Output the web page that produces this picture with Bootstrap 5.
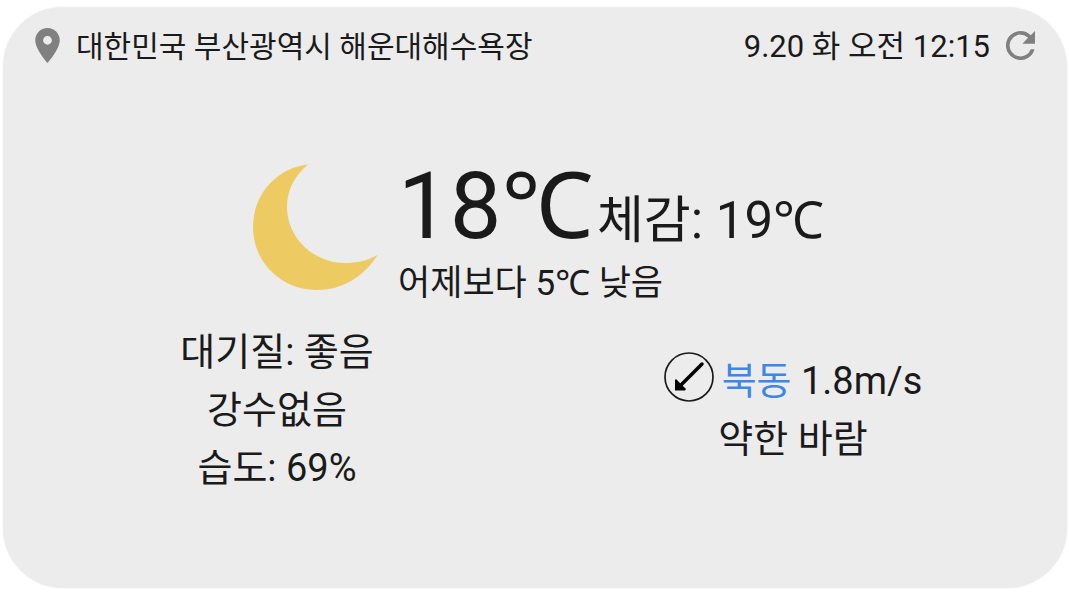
<!DOCTYPE html>
<html lang="ko">
<head>
<meta charset="utf-8">
<meta name="viewport" content="width=device-width, initial-scale=1">
<title>해운대해수욕장 날씨</title>
<link href="https://cdn.jsdelivr.net/npm/bootstrap@5.3.0/dist/css/bootstrap.min.css" rel="stylesheet">
<style>
body { font-family: Roboto, "Noto Sans", "Noto Sans CJK KR", sans-serif; color: #1a1a1a; background: #fff; padding: 7px 2px 4px 3px; }
.weather { background: #ececec; border-radius: 60px; padding: 14px 16px 16px; box-shadow: 0 0 2px #ececec; }
.topbar { font-size: 30px; line-height: 44px; }
.topbar span, .topbar time { padding-top: 4px; }
.topbar time { font-size: 31px; }
.topbar svg { fill: #808080; display: block; }
.refresh { line-height: 1; }
.now { margin-top: 86px; margin-left: 233px; gap: 20px; }
.readings { padding-top: 4px; }
.temp { font-size: 92px; line-height: 96px; }
.feels { font-size: 51px; line-height: 96px; }
.versus { font-size: 35px; line-height: 30px; }
.details { font-size: 38px; line-height: 58px; }
.wind-dir { color: #3e87e8; }
</style>
</head>
<body class="min-vh-100 d-flex">
<main class="weather flex-grow-1">
  <header class="topbar d-flex justify-content-between align-items-center px-3">
    <div class="d-flex align-items-center gap-3">
      <svg width="25" height="35" viewBox="5 2 14 20" aria-hidden="true"><path d="M12 2C8.130 2 5 5.130 5 9c0 5.250 7 13 7 13s7-7.750 7-13c0-3.870-3.130-7-7-7zm0 9.500a2.500 2.500 0 1 1 0-5 2.500 2.500 0 0 1 0 5z"/></svg>
      <span>대한민국 부산광역시 해운대해수욕장</span>
    </div>
    <div class="d-flex align-items-center gap-3">
      <time>9.20 화 오전 12:15</time>
      <button type="button" class="refresh border-0 bg-transparent p-0" aria-label="새로고침">
        <svg width="29" height="29" viewBox="4 4 16 16"><path d="M17.650 6.350A7.958 7.958 0 0 0 12 4a8 8 0 1 0 7.730 10h-2.080A6 6 0 1 1 12 6c1.660 0 3.140.690 4.220 1.780L13 11h7V4l-2.350 2.350z"/></svg>
      </button>
    </div>
  </header>
  <section class="now d-flex align-items-center">
    <svg width="126" height="127" viewBox="0 0 126 127" aria-hidden="true"><path fill="#edcb62" d="M56 .5C24 4 1 31 1 63C1 98 29 126 65 126C90 126 112 113 125.500 91C115 97 104 99 93 99C61 99 35 73 35 43C35 26 43 11 56 .5Z"/></svg>
    <div class="readings">
      <div class="d-flex align-items-baseline gap-1">
        <span class="temp">18℃</span>
        <span class="feels">체감: 19℃</span>
      </div>
      <div class="versus">어제보다 5℃ 낮음</div>
    </div>
  </section>
  <section class="details row g-0 align-items-center text-center mt-4">
    <div class="col-6">
      <div>대기질: 좋음</div>
      <div>강수없음</div>
      <div>습도: 69%</div>
    </div>
    <div class="col-6">
      <div class="d-flex justify-content-center align-items-start gap-2">
        <svg width="50" height="50" viewBox="0 0 50 50" aria-hidden="true"><circle cx="25" cy="25" r="24" fill="none" stroke="#1a1a1a" stroke-width="1.700"/><path d="M38 12L15 35" stroke="#000" stroke-width="3.500" stroke-linecap="round"/><path d="M11 28V38.500H21L22 37L12 27Z"/></svg>
        <span><span class="wind-dir">북동</span> 1.8m/s</span>
      </div>
      <div>약한 바람</div>
    </div>
  </section>
</main>
<script src="https://cdn.jsdelivr.net/npm/bootstrap@5.3.0/dist/js/bootstrap.bundle.min.js"></script>
</body>
</html>
